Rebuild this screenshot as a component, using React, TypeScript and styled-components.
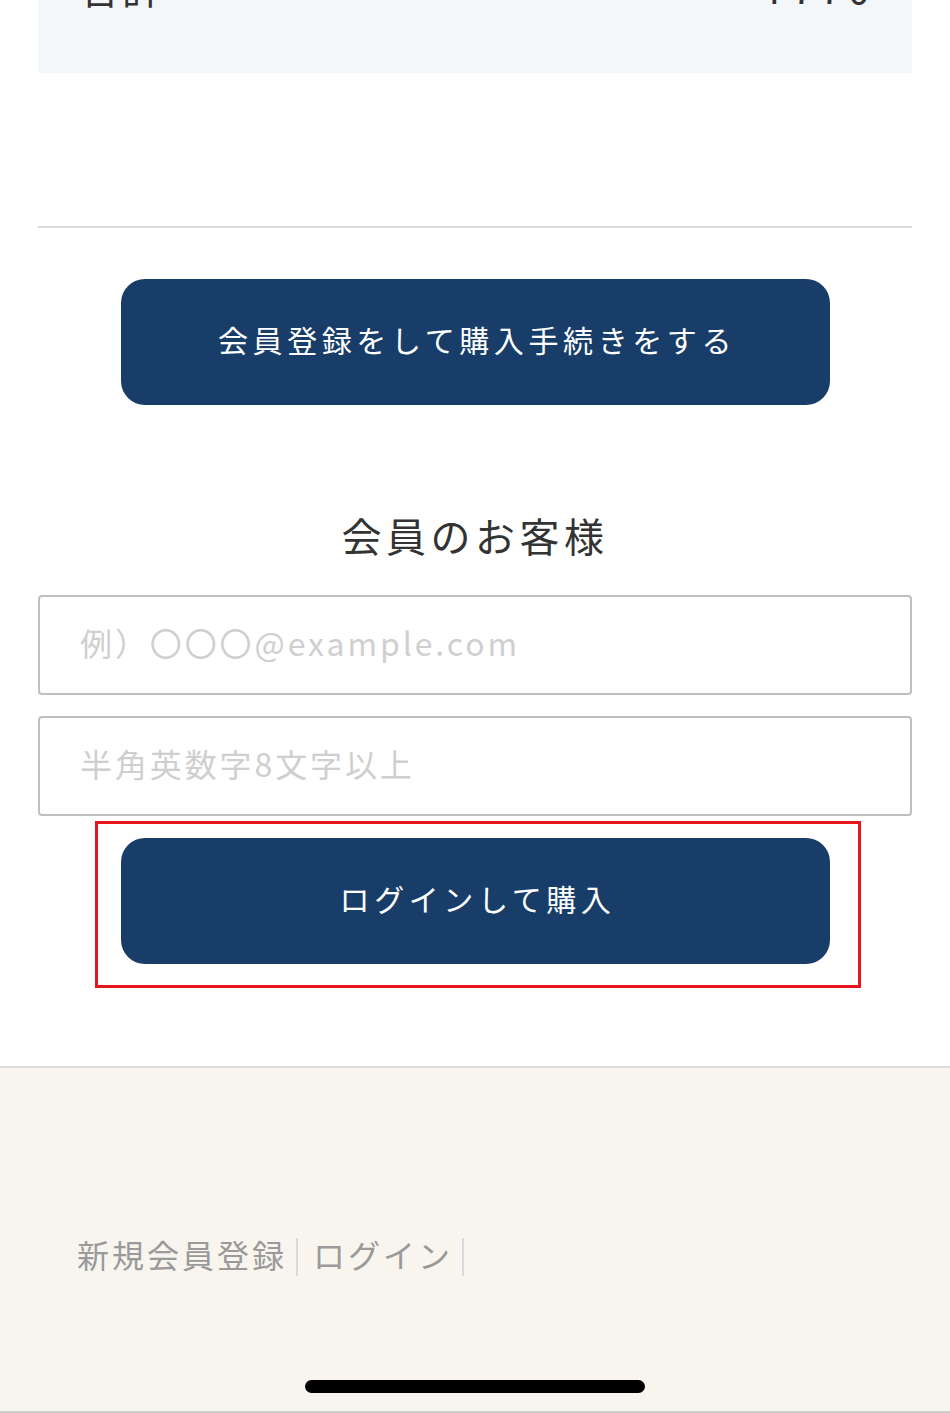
import React from "react";
import styled, { createGlobalStyle } from "styled-components";

const Global = createGlobalStyle`
  html, body { margin: 0; padding: 0; background: #ffffff; }
  body { font-family: "Noto Sans CJK JP", "Noto Sans", sans-serif; color: #333; }
  * { box-sizing: border-box; }
`;

const Page = styled.div`
  width: 950px;
  min-height: 1413px;
  display: flex;
  flex-direction: column;
  overflow: hidden;
`;

const TotalBox = styled.div`
  margin: 0 38px;
  height: 73px;
  background: #f3f7fa;
  padding: 0 42px 0 42px;
`;

const TotalRow = styled.div`
  display: flex;
  justify-content: space-between;
  margin-top: -33px;
  line-height: 40px;
  font-size: 40px;
  color: #333;
  letter-spacing: 2px;
`;

const Amount = styled.span`
  letter-spacing: 6px;
  margin-right: -6px;
`;

const Divider = styled.hr`
  margin: 153px 38px 0;
  border: none;
  height: 2px;
  background: #d9dbdd;
`;

const Main = styled.div`
  display: flex;
  flex-direction: column;
  align-items: center;
  padding: 51px 38px 0;
`;

const PrimaryButton = styled.button`
  width: 709px;
  height: 126px;
  border: none;
  border-radius: 24px;
  background: #173d68;
  color: #ffffff;
  font-family: "Noto Sans CJK JP", sans-serif;
  font-size: 30px;
  letter-spacing: 4.6px;
  display: flex;
  align-items: center;
  justify-content: center;
  padding: 0 0 7px 4px;
`;

const Heading = styled.h2`
  margin: 105px 0 0;
  font-size: 40px;
  line-height: 50px;
  font-weight: 400;
  letter-spacing: 4.5px;
  color: #333;
`;

const Field = styled.input<{ $top: number }>`
  width: 874px;
  height: 100px;
  border: 2px solid #bdbfc1;
  border-radius: 4px;
  margin-top: ${(p) => p.$top}px;
  padding: 0 40px 6px;
  font-family: "Noto Sans CJK JP", sans-serif;
  font-size: 32px;
  letter-spacing: 2.9px;
  color: #333;
  background: #fff;
  &::placeholder { color: #cfcfcf; }
`;

const Highlight = styled.div`
  align-self: flex-start;
  margin: 5px 0 0 57px;
  width: 766px;
  border: 3px solid #e8141c;
  padding: 14px 28px 21px 23px;
`;

const Footer = styled.footer`
  margin-top: 78px;
  border-top: 2px solid #dcdcdc;
  background: #f8f5ef;
  flex: 1;
  display: flex;
  flex-direction: column;
  border-bottom: 2px solid #cfcfcf;
`;

const FooterLinks = styled.nav`
  display: flex;
  align-items: center;
  margin: 164px 0 0 77px;
  font-size: 32px;
  line-height: 40px;
  color: #9a9a9a;
  letter-spacing: 3px;
`;

const Sep = styled.span`
  width: 2px;
  height: 38px;
  background: #d8dadc;
  margin: 6px 15px 0 9px;
`;

const HomeBar = styled.div`
  align-self: center;
  width: 340px;
  height: 13px;
  border-radius: 7px;
  background: #000;
  margin-top: 104px;
`;

export default function App() {
  return (
    <Page>
      <Global />
      <TotalBox>
        <TotalRow>
          <span>合計</span>
          <Amount>¥770</Amount>
        </TotalRow>
      </TotalBox>
      <Divider />
      <Main>
        <PrimaryButton>会員登録をして購入手続きをする</PrimaryButton>
        <Heading>会員のお客様</Heading>
        <Field $top={35} type="email" placeholder="例）〇〇〇@example.com" />
        <Field $top={21} type="password" placeholder="半角英数字8文字以上" />
        <Highlight>
          <PrimaryButton>ログインして購入</PrimaryButton>
        </Highlight>
      </Main>
      <Footer>
        <FooterLinks>
          <span>新規会員登録</span>
          <Sep />
          <span>ログイン</span>
          <Sep />
        </FooterLinks>
        <HomeBar />
      </Footer>
    </Page>
  );
}
